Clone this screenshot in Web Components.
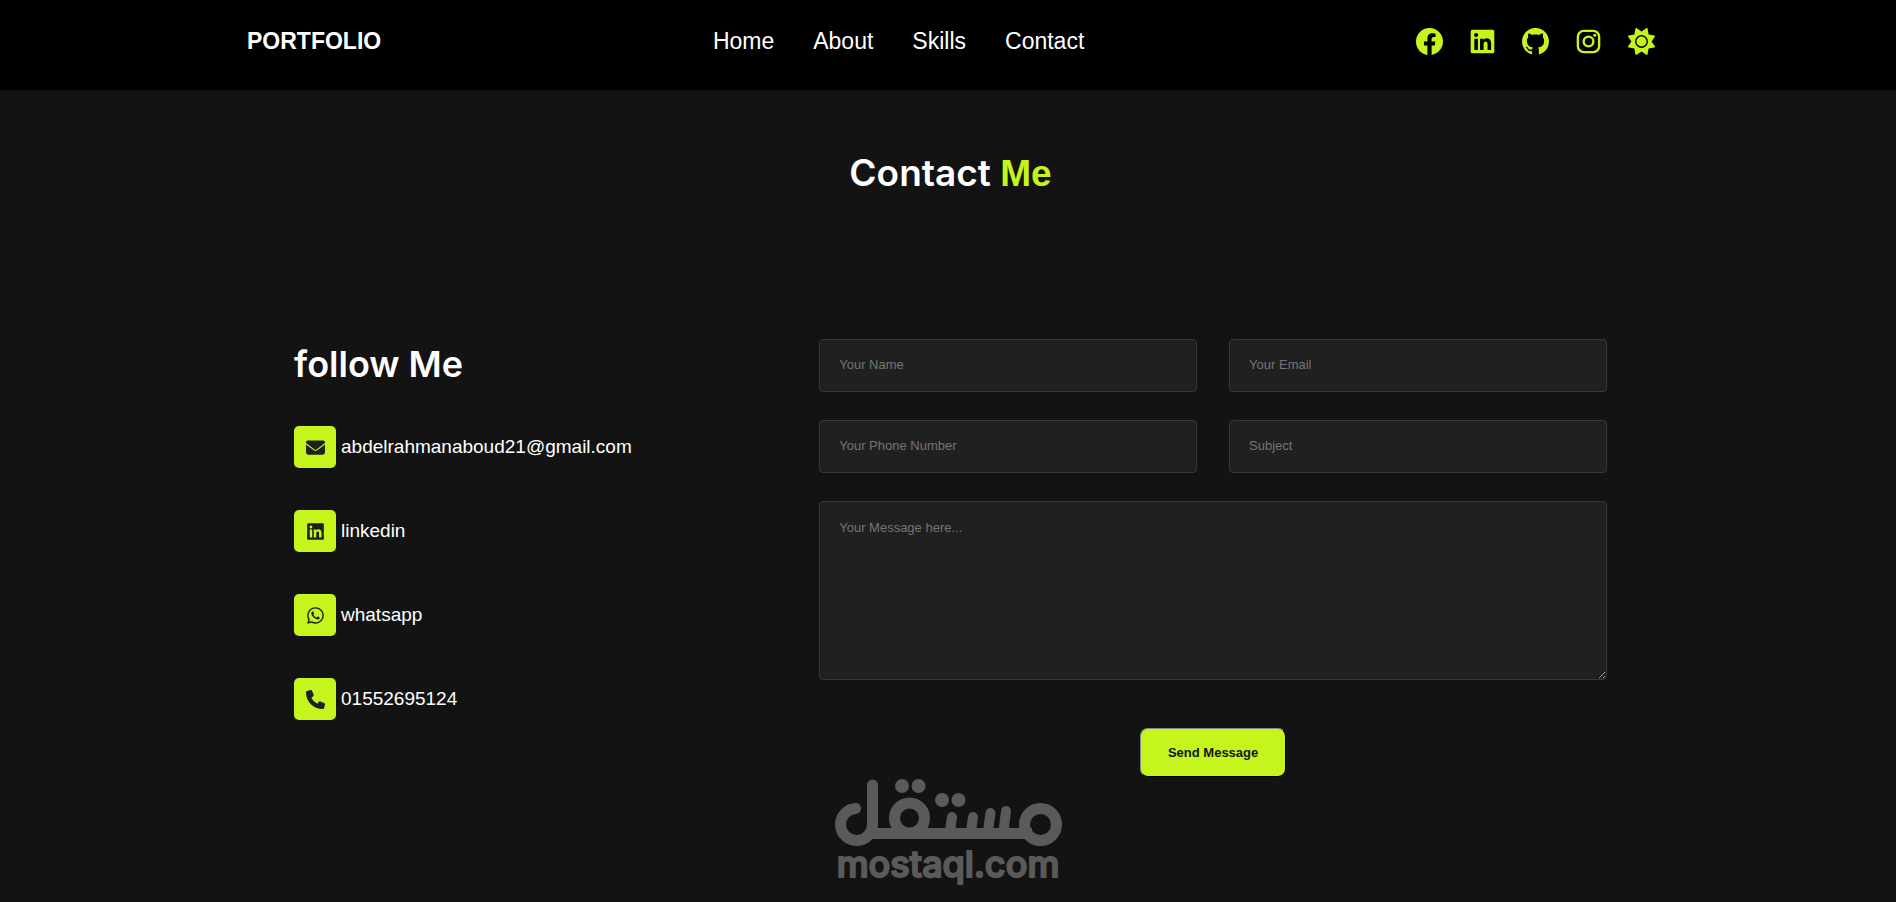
<!DOCTYPE html>
<html lang="en">
<head>
  <meta charset="UTF-8">
  <meta name="viewport" content="width=device-width, initial-scale=1.0">
  <title>Portfolio</title>
  <style>
    :root {
      --main: #c6f51e;
      --bg: #131313;
      --field: #202020;
      --line: #373737;
    }
    body {
      margin: 0;
      min-height: 100vh;
      display: flex;
      flex-direction: column;
      background: var(--bg);
      color: #fff;
      font-family: "Liberation Sans", Arial, sans-serif;
    }
  </style>
</head>
<body>
  <site-header></site-header>
  <contact-section>
    <follow-list slot="info">
      <follow-item icon="mail" href="mailto:abdelrahmanaboud21@gmail.com">abdelrahmanaboud21@gmail.com</follow-item>
      <follow-item icon="linkedin" href="#linkedin">linkedin</follow-item>
      <follow-item icon="whatsapp" href="#whatsapp">whatsapp</follow-item>
      <follow-item icon="phone" href="tel:01552695124">01552695124</follow-item>
    </follow-list>
    <contact-form slot="form"></contact-form>
  </contact-section>
  <mostaql-mark></mostaql-mark>

  <script>
    const icons = {
      facebook: '<path d="M16 8.049c0-4.446-3.582-8.05-8-8.05C3.58 0-.002 3.603-.002 8.05c0 4.017 2.926 7.347 6.75 7.951v-5.625h-2.03V8.05H6.75V6.275c0-2.017 1.195-3.131 3.022-3.131.876 0 1.791.157 1.791.157v1.98h-1.009c-.993 0-1.303.621-1.303 1.258v1.51h2.218l-.354 2.326H9.25V16c3.824-.604 6.75-3.934 6.75-7.951"/>',
      linkedin: '<path d="M2 1h12a1 1 0 0 1 1 1v12a1 1 0 0 1-1 1H2a1 1 0 0 1-1-1V2a1 1 0 0 1 1-1zm1.15 5.3v6.7h2.1V6.3zM4.2 3a1.2 1.2 0 1 0 0 2.4A1.2 1.2 0 0 0 4.2 3zm2.35 3.3v6.7h2.1V9.6c0-1 .5-1.6 1.3-1.6s1.05.6 1.05 1.6v3.4h2.1V9.2c0-2-1-3.1-2.5-3.1-.95 0-1.55.45-1.95 1.05v-.85z" fill-rule="evenodd"/>',
      github: '<path d="M8 0C3.58 0 0 3.58 0 8c0 3.54 2.29 6.53 5.47 7.59.4.07.55-.17.55-.38 0-.19-.01-.82-.01-1.49-2.01.37-2.53-.49-2.69-.94-.09-.23-.48-.94-.82-1.13-.28-.15-.68-.52-.01-.53.63-.01 1.08.58 1.23.82.72 1.21 1.87.87 2.33.66.07-.52.28-.87.51-1.07-1.78-.2-3.64-.89-3.64-3.95 0-.87.31-1.59.82-2.15-.08-.2-.36-1.02.08-2.12 0 0 .67-.21 2.2.82.64-.18 1.32-.27 2-.27s1.36.09 2 .27c1.53-1.04 2.2-.82 2.2-.82.44 1.1.16 1.92.08 2.12.51.56.82 1.27.82 2.15 0 3.07-1.87 3.75-3.65 3.95.29.25.54.73.54 1.48 0 1.07-.01 1.93-.01 2.2 0 .21.15.46.55.38A8.01 8.01 0 0 0 16 8c0-4.42-3.58-8-8-8"/>',
      instagram: '<rect x="1.7" y="1.7" width="12.6" height="12.6" rx="3.5" fill="none" stroke="currentColor" stroke-width="1.4"/><circle cx="8" cy="8" r="2.9" fill="none" stroke="currentColor" stroke-width="1.4"/><circle cx="11.7" cy="4.3" r=".9"/>',
      sun: '<path transform="scale(.03125)" fill-rule="evenodd" d="M361.500 1.200c5 2.100 8.600 6.600 9.600 11.900L391 121l107.900 19.800c5.300 1 9.800 4.600 11.900 9.600s1.500 10.700-1.600 15.200L446.900 256l62.300 90.300c3.100 4.500 3.700 10.200 1.600 15.200s-6.600 8.600-11.900 9.600L391 391l-19.900 107.900c-1 5.300-4.600 9.800-9.600 11.900s-10.700 1.500-15.200-1.600L256 446.900l-90.300 62.300c-4.500 3.100-10.200 3.700-15.200 1.600s-8.600-6.600-9.600-11.900L121 391 13.100 371.100c-5.300-1-9.800-4.600-11.900-9.600s-1.500-10.700 1.600-15.200L65.100 256 2.800 165.700c-3.100-4.500-3.700-10.200-1.600-15.200s6.600-8.600 11.900-9.600L121 121 140.900 13.100c1-5.300 4.600-9.800 9.600-11.900s10.700-1.500 15.200 1.600L256 65.100l90.300-62.300c4.500-3.100 10.200-3.700 15.200-1.600zM160 256a96 96 0 1 1 192 0 96 96 0 1 1-192 0zm218 0a122 122 0 1 0-244 0 122 122 0 1 0 244 0z"/>',
      mail: '<path d="M1.5 2A1.5 1.5 0 0 0 0 3.5c0 .47.22.92.6 1.2l6.8 5.1c.36.27.84.27 1.2 0l6.8-5.1c.38-.28.6-.73.6-1.2A1.5 1.5 0 0 0 14.5 2zM0 5.5V12a2 2 0 0 0 2 2h12a2 2 0 0 0 2-2V5.5l-6.8 5.1c-.71.53-1.69.53-2.4 0z"/>',
      whatsapp: '<path d="M12.9 3.03A6.94 6.94 0 0 0 7.96 1 6.95 6.95 0 0 0 1.93 11.4L1 15l3.68-.97a6.9 6.9 0 0 0 3.32.85c3.83 0 7-3.12 7-6.95 0-1.86-.78-3.6-2.1-4.9zM8 13.71a5.76 5.76 0 0 1-2.94-.8l-.21-.13-2.18.57.58-2.13-.14-.22A5.77 5.77 0 0 1 7.97 2.17c1.54 0 2.99.6 4.08 1.7 1.09 1.08 1.76 2.53 1.75 4.06 0 3.19-2.65 5.78-5.8 5.78zm3.17-4.33c-.17-.09-1.02-.5-1.18-.56-.16-.06-.27-.09-.39.09-.11.17-.45.56-.55.68-.1.11-.2.13-.37.04-1.02-.51-1.69-.91-2.36-2.06-.18-.31.18-.29.51-.95.06-.11.03-.21-.01-.3-.05-.09-.39-.95-.54-1.3-.14-.34-.28-.29-.39-.3h-.33a.63.63 0 0 0-.47.22c-.16.17-.61.6-.61 1.45s.63 1.69.71 1.8c.09.12 1.23 1.88 2.98 2.63 1.11.48 1.54.52 2.09.44.34-.05 1.03-.42 1.18-.83.14-.41.14-.76.1-.83-.04-.08-.16-.12-.33-.21z"/>',
      phone: '<path d="M5.15.77A1.25 1.25 0 0 0 3.67.04L.92.79A1.25 1.25 0 0 0 0 2c0 7.73 6.27 14 14 14 .56 0 1.06-.38 1.21-.92l.75-2.75a1.25 1.25 0 0 0-.73-1.48l-3-1.25a1.24 1.24 0 0 0-1.44.36l-1.27 1.54A10.56 10.56 0 0 1 4.5 6.47l1.54-1.26c.42-.35.57-.94.36-1.44z"/>'
    };

    class AppIcon extends HTMLElement {
      constructor() {
        super();
        this.root = this.attachShadow({ mode: 'open' });
      }

      connectedCallback() {
        this.root.innerHTML = `
          <style>
            :host { display: block; width: 27px; height: 27px; }
            svg { display: block; width: 100%; height: 100%; fill: currentColor; }
          </style>
          <svg viewBox="0 0 16 16" aria-hidden="true">${icons[this.getAttribute('name')]}</svg>`;
      }
    }

    class SiteHeader extends HTMLElement {
      constructor() {
        super();
        this.root = this.attachShadow({ mode: 'open' });
        this.root.innerHTML = `
          <style>
            :host { display: block; background: #000; }
            header {
              box-sizing: border-box;
              display: flex;
              justify-content: space-between;
              align-items: center;
              height: 90px;
              padding: 0 241px 7px 247px;
            }
            a { color: #fff; text-decoration: none; }
            .logo { font-size: 23px; font-weight: 700; }
            nav { display: flex; gap: 39px; font-size: 23px; }
            .social { display: flex; gap: 26px; }
            .social a, button { color: var(--main); }
            button { padding: 0; border: 0; background: none; cursor: pointer; }
          </style>
          <header>
            <a class="logo" href="#">PORTFOLIO</a>
            <nav>
              <a href="#home">Home</a>
              <a href="#about">About</a>
              <a href="#skills">Skills</a>
              <a href="#contact">Contact</a>
            </nav>
            <div class="social">
              <a href="#facebook" aria-label="Facebook"><app-icon name="facebook"></app-icon></a>
              <a href="#linkedin" aria-label="LinkedIn"><app-icon name="linkedin"></app-icon></a>
              <a href="#github" aria-label="GitHub"><app-icon name="github"></app-icon></a>
              <a href="#instagram" aria-label="Instagram"><app-icon name="instagram"></app-icon></a>
              <button type="button" aria-label="Toggle theme"><app-icon name="sun"></app-icon></button>
            </div>
          </header>`;
      }
    }

    class ContactSection extends HTMLElement {
      constructor() {
        super();
        this.root = this.attachShadow({ mode: 'open' });
        this.root.innerHTML = `
          <style>
            :host { display: block; padding: 58px 289px 0 294px; }
            h1 {
              margin: 0 0 140px;
              font: 600 37px/50px Inter, sans-serif;
              text-align: center;
            }
            span { color: var(--main); font-family: "Liberation Sans", Arial, sans-serif; font-weight: 700; }
            .row { display: grid; grid-template-columns: 2fr 3fr; }
          </style>
          <h1>Contact <span>Me</span></h1>
          <div class="row">
            <slot name="info"></slot>
            <slot name="form"></slot>
          </div>`;
      }
    }

    class FollowList extends HTMLElement {
      constructor() {
        super();
        this.root = this.attachShadow({ mode: 'open' });
        this.root.innerHTML = `
          <style>
            :host { display: block; }
            h2 { margin: 0 0 37px; font: 600 36px/50px Inter, sans-serif; }
            div { display: grid; gap: 42px; }
          </style>
          <h2>follow Me</h2>
          <div><slot></slot></div>`;
      }
    }

    class FollowItem extends HTMLElement {
      constructor() {
        super();
        this.root = this.attachShadow({ mode: 'open' });
      }

      connectedCallback() {
        this.root.innerHTML = `
          <style>
            :host { display: block; }
            a { display: inline-flex; align-items: center; gap: 5px; color: #fff; font-size: 19px; text-decoration: none; }
            .box {
              display: grid;
              place-items: center;
              width: 42px;
              height: 42px;
              border-radius: 5px;
              background: var(--main);
              color: #202020;
            }
            app-icon { width: 19px; height: 19px; }
          </style>
          <a href="${this.getAttribute('href')}">
            <div class="box"><app-icon name="${this.getAttribute('icon')}"></app-icon></div>
            <slot></slot>
          </a>`;
      }
    }

    class ContactForm extends HTMLElement {
      constructor() {
        super();
        this.root = this.attachShadow({ mode: 'open' });
        this.root.innerHTML = `
          <style>
            :host { display: block; }
            form { display: grid; grid-template-columns: 1fr 1fr; gap: 28px 32px; }
            input, textarea {
              box-sizing: border-box;
              width: 100%;
              border: 1px solid var(--line);
              border-radius: 4px;
              background: var(--field);
              color: #fff;
              padding: 0 19px 2px;
              font: 13px "Liberation Sans", Arial, sans-serif;
            }
            input { height: 53px; }
            textarea { display: block; grid-column: 1 / -1; height: 179px; padding-top: 18px; }
            ::placeholder { color: #757575; }
            button {
              grid-column: 1 / -1;
              justify-self: center;
              margin-top: 20px;
              padding: 16px 27px;
              border: 1px outset #333;
              border-radius: 8px;
              background: var(--main);
              color: #131313;
              font: 700 13px/15px "Liberation Sans", Arial, sans-serif;
              cursor: pointer;
            }
          </style>
          <form>
            <input type="text" placeholder="Your Name" aria-label="Your Name">
            <input type="email" placeholder="Your Email" aria-label="Your Email">
            <input type="tel" placeholder="Your Phone Number" aria-label="Your Phone Number">
            <input type="text" placeholder="Subject" aria-label="Subject">
            <textarea placeholder="Your Message here..." aria-label="Your Message"></textarea>
            <button type="submit">Send Message</button>
          </form>`;
      }
    }

    // logo: joined strokes and dots above the site name
    class MostaqlMark extends HTMLElement {
      constructor() {
        super();
        this.root = this.attachShadow({ mode: 'open' });
        this.root.innerHTML = `
          <style>
            :host { display: flex; flex-direction: column; align-items: center; padding-top: 2px; color: #5a5a5a; }
            svg { display: block; width: 228px; height: 68px; }
            p { margin: 0; font: 500 36px/34px Inter, sans-serif; -webkit-text-stroke: 2px currentColor; }
          </style>
          <svg viewBox="0 0 228 68" fill="none" stroke="currentColor" stroke-width="11" stroke-linecap="round" aria-hidden="true">
            <path d="M21.500 29.500A16 16 0 1 0 38.500 45V6"/>
            <path d="M36 54.500H198" stroke-linecap="butt"/>
            <circle cx="75.500" cy="39" r="15"/>
            <circle cx="206.500" cy="45.500" r="16"/>
            <path d="M116 52l2-14M137 52l2-14M154 52l2.500-18M169.500 52l2.500-20" stroke-width="10"/>
            <g fill="currentColor" stroke="none">
              <circle cx="68" cy="7" r="7"/><circle cx="84.500" cy="7" r="7"/>
              <circle cx="108" cy="21" r="7"/><circle cx="124.500" cy="21" r="7"/>
            </g>
          </svg>
          <p>mostaql.com</p>`;
      }
    }

    customElements.define('app-icon', AppIcon);
    customElements.define('site-header', SiteHeader);
    customElements.define('follow-item', FollowItem);
    customElements.define('follow-list', FollowList);
    customElements.define('contact-form', ContactForm);
    customElements.define('contact-section', ContactSection);
    customElements.define('mostaql-mark', MostaqlMark);
  </script>
</body>
</html>
